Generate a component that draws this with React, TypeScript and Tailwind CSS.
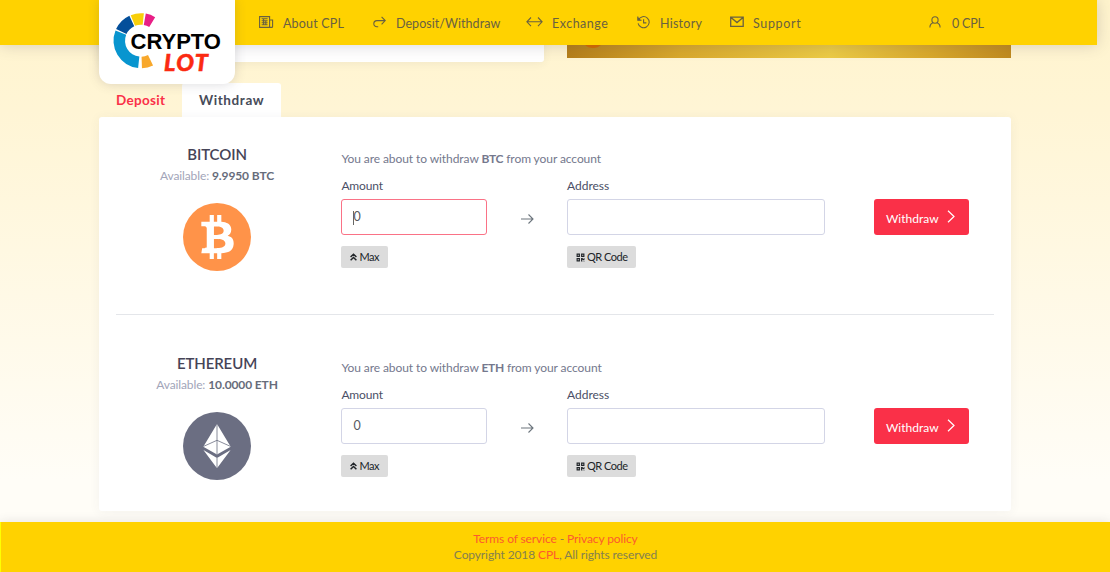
import React from "react";
import { FaBtc, FaQrcode } from "react-icons/fa";

function ringSegment(from: number, to: number, fill: string) {
  const cx = 42;
  const cy = 40.7;
  const point = (r: number, deg: number) => {
    const a = (deg * Math.PI) / 180;
    return `${(cx + r * Math.sin(a)).toFixed(2)} ${(cy - r * Math.cos(a)).toFixed(2)}`;
  };
  const R = 27.5;
  const r = 16;
  return (
    <path
      key={fill}
      fill={fill}
      d={`M${point(R, from)} A${R} ${R} 0 0 1 ${point(R, to)} L${point(r, to)} A${r} ${r} 0 0 0 ${point(r, from)} Z`}
    />
  );
}

function Logo() {
  return (
    <svg viewBox="0 0 136 84" className="block h-[84px] w-[136px]">
      {ringSegment(186, 292, "#0895cf")}
      {ringSegment(295, 335, "#044f9a")}
      {ringSegment(338, 366, "#f8cf0a")}
      {ringSegment(370, 391, "#e81f86")}
      {ringSegment(154, 178, "#f8a82c")}
      <text x="31.5" y="48.5" fontSize="22.5" fontWeight="700" fontFamily="Liberation Sans, sans-serif" textLength="90.5" lengthAdjust="spacingAndGlyphs" stroke="#fff" strokeWidth="1.2" paintOrder="stroke">
        CRYPTO
      </text>
      <text x="65" y="71" fontSize="23.5" fontWeight="900" fontStyle="italic" fontFamily="Lato, sans-serif" fill="#fb2a12" stroke="#fb2a12" strokeWidth=".5" textLength="44" lengthAdjust="spacing">
        LOT
      </text>
    </svg>
  );
}

const line = { fill: "none", stroke: "currentColor", strokeWidth: 1.1 };

const NewsIcon = () => (
  <svg viewBox="0 0 15 12" className="h-3 w-[15px]" {...line}>
    <path d="M.6.6h10v10.8h-10zM10.6 4h3v6.4a1 1 0 0 1-1 1h-2M2.6 2.8h6M2.6 4.8h6M2.6 6.8h6M2.6 8.8h6M4.6 2.8v6M6.8 4.8v4" />
  </svg>
);
const RedoIcon = () => (
  <svg viewBox="0 0 13 12" className="h-3 w-[13px]" {...line}>
    <path d="M8.6.9l3.6 3.7-3.6 3.7M12 4.6H3.9a3.1 3.1 0 0 0 0 6.2h1.3" />
  </svg>
);
const SwapIcon = () => (
  <svg viewBox="0 0 17 12" className="h-3 w-[17px]" {...line}>
    <path d="M1 5.8h15M5 1.5L.9 5.8 5 10.1M12 1.5l4.1 4.3-4.1 4.3" />
  </svg>
);
const HistoryIcon = () => (
  <svg viewBox="0 0 13 13" className="h-[13px] w-[13px]" {...line}>
    <path d="M1.5 3.8A5.6 5.6 0 1 1 1.1 7.4M.8.6v3.7h3.8M6.6 3.2v3.7h2.8" />
    <path d="M.8 1l3.2 3.2H.8z" fill="currentColor" stroke="none" />
  </svg>
);
const MailIcon = () => (
  <svg viewBox="0 0 14 12" className="h-3 w-[14px]" {...line}>
    <path d="M.7 1.1h12.5v9.2H.7zM1 1.6l6 5 6-5" strokeWidth="1.3" />
  </svg>
);
const UserIcon = () => (
  <svg viewBox="0 0 12 13" className="h-[13px] w-3" {...line}>
    <path d="M6 .8c1.9 0 3.1 1.4 3.1 3.1S7.8 7.2 6 7.2 2.9 5.6 2.9 3.900 4.1.8 6 .8zM4.300 6.800C2.300 7.400.9 9 .9 11.400M7.700 6.800c2 .6 3.400 2.200 3.400 4.600" />
  </svg>
);
const ArrowRight = () => (
  <svg viewBox="0 0 13 12" className="h-3 w-[13px] text-[#6c757d]" {...line}>
    <path d="M0 6h12M7.500 1.500L12 6l-4.500 4.500" />
  </svg>
);
const ChevronRight = () => (
  <svg viewBox="0 0 8 13" className="h-[13px] w-2" {...line}>
    <path d="M1 .8l6 5.700-6 5.700" strokeWidth="1.2" />
  </svg>
);
const DoubleUp = () => (
  <svg viewBox="0 0 7 8" className="h-2 w-[7px] shrink-0" fill="none" stroke="#212529" strokeWidth="1.5">
    <path d="M.6 4L3.500 1.200 6.400 4M.6 7.300l2.900-2.800 2.900 2.800" />
  </svg>
);

function BitcoinLogo() {
  return (
    <div className="flex h-[68px] w-[68px] items-center justify-center rounded-full bg-[#ff9349] text-white">
      <FaBtc className="h-[44px] w-[33px]" />
    </div>
  );
}

function EthereumLogo() {
  return (
    <svg viewBox="0 0 68 68" className="h-[68px] w-[68px]">
      <circle cx="34" cy="34" r="34" fill="#6b6e82" />
      <path fill="#fff" d="M34 12l13.700 22.700L34 42.500l-13.700-7.800zM20.400 38L34 45.900 47.600 38 34 56.300z" />
      <path d="M34 12v30.500M34 46v10M20.500 34.400L34 28.300l13.500 6.100" fill="none" stroke="#6b6e82" strokeWidth=".8" />
    </svg>
  );
}

const nav = [
  { label: "About CPL", icon: <NewsIcon />, item: "w-[114px]", slot: "w-6", text: "tracking-[0.18px]" },
  { label: "Deposit/Withdraw", icon: <RedoIcon />, item: "w-[153px]", slot: "w-[23px]", text: "tracking-[0.05px]" },
  { label: "Exchange", icon: <SwapIcon />, item: "w-[111px]", slot: "w-[26px]", text: "tracking-[0.5px]" },
  { label: "History", icon: <HistoryIcon />, item: "w-[93px]", slot: "w-[23px]", text: "tracking-[0.25px]" },
  { label: "Support", icon: <MailIcon />, item: "w-[199px]", slot: "w-[23px]", text: "tracking-[0.65px]" },
  { label: "0 CPL", icon: <UserIcon />, item: "w-[60px]", slot: "w-[23px]", text: "tracking-[-0.2px]" },
];

function Header() {
  return (
    <header className="absolute left-0 top-0 z-10 flex h-[45px] w-[1097px] bg-[#ffd200] pl-[99px] shadow-[0_0_16px_rgba(69,65,78,0.22)]">
      <div className="h-[84px] w-[136px] shrink-0 rounded-b-[12px] bg-white shadow-[0_0_12px_rgba(69,65,78,0.2)]">
        <Logo />
      </div>
      <nav className="flex h-[45px] pl-6 text-[12.5px] text-[#6a6140]">
        {nav.map((n) => (
          <a key={n.label} className={`flex items-center whitespace-nowrap ${n.item}`}>
            <span className={`-mt-px shrink-0 ${n.slot}`}>{n.icon}</span>
            <span className={`pt-[4px] ${n.text}`}>{n.label}</span>
          </a>
        ))}
      </nav>
    </header>
  );
}

type Coin = { name: string; code: string; available: string; logo: React.ReactNode; active?: boolean };

function CoinRow({ coin }: { coin: Coin }) {
  const smallButton = "mt-[11px] flex h-[22px] items-center rounded-[2px] bg-[#dcdcdc] text-[11px] text-[#212529]";
  return (
    <section className="flex h-[197px] pt-[27px]">
      <div className="flex w-[202px] flex-col items-center">
        <h2 className="text-[15px] font-semibold leading-5 tracking-[-0.1px] text-[#464457]">{coin.name}</h2>
        <p className="mt-[3px] text-xs leading-[18px] tracking-[-0.12px] text-[#a2a5b9]">
          Available: <b className="font-bold text-[#676c7b]">{coin.available}</b>
        </p>
        <div className="mt-[17.5px]">{coin.logo}</div>
      </div>
      <div className="ml-[23.4px] pt-[5px]">
        <p className="text-xs leading-[19px] tracking-[-0.08px] text-[#74788d]">
          You are about to withdraw <b className="font-bold tracking-[-0.3px]">{coin.code}</b> from your account
        </p>
        <div className="mt-[8px] flex">
          <div className="w-[146px]">
            <label className="block text-xs leading-[19px] tracking-[-0.15px] text-[#4b4f66]">Amount</label>
            <div className={`mt-[4px] flex h-[36px] items-center rounded-[3px] border pl-[11px] text-[12.5px] text-[#575962] ${coin.active ? "border-[#fa7286]" : "border-[#d3d5e6]"}`}>
              <span className="relative">
                0
                {coin.active && <i className="absolute left-0 top-[3px] h-[14px] w-px bg-[#666]" />}
              </span>
            </div>
            <button className={`${smallButton} w-[46.5px] gap-[2px] pl-[9px] tracking-[-0.5px]`}>
              <DoubleUp /> Max
            </button>
          </div>
          <div className="w-[79.600px] pl-[33.500px] pt-[37px]">
            <ArrowRight />
          </div>
          <div className="w-[258px]">
            <label className="block text-xs leading-[19px] text-[#4b4f66]">Address</label>
            <div className="mt-[4px] h-[36px] rounded-[3px] border border-[#d3d5e6]" />
            <button className={`${smallButton} w-[69.5px] gap-[2px] whitespace-nowrap pl-[9px] tracking-[-0.5px]`}>
              <FaQrcode className="h-[9px] w-[9px] shrink-0" /> QR Code
            </button>
          </div>
          <button className="ml-[49px] mt-[23px] flex h-[36px] w-[95px] items-center rounded-[3px] bg-[#fa3048] pl-3 text-xs text-white">
            <span className="pt-[3px]">Withdraw</span>
            <span className="-mt-px ml-[8px]"><ChevronRight /></span>
          </button>
        </div>
      </div>
    </section>
  );
}

export default function App() {
  return (
    <div className="relative flex h-[572px] w-[1110px] flex-col overflow-hidden bg-[linear-gradient(180deg,#fff4cd_0px,#fff5d5_110px,#fffdf7_480px)] font-[Lato,sans-serif]">
      <Header />
      <div className="flex h-[82.5px] shrink-0 items-start pl-[99px]">
        <div className="h-[62px] w-[444.500px] rounded-b-[3px] bg-white shadow-[0_1px_10px_rgba(69,65,78,0.08)]" />
        <div className="ml-[23.500px] h-[58px] w-[444px] overflow-hidden bg-[linear-gradient(100deg,#b27b18_0%,#d9a92c_27%,#eccb45_60%,#d9a92c_82%,#c08a1e_100%)] pl-[14px] pt-[22px]">
          <div className="h-[25.500px] w-[24px] rounded-full bg-[#d46a00]" />
        </div>
      </div>
      <div className="flex h-[34.5px] shrink-0 pl-[99px] text-[13.5px] font-bold leading-[35px]">
        <div className="w-[83px] pl-[17px] tracking-[0.3px] text-[#fa3048]">Deposit</div>
        <div className="w-[99px] rounded-t-[3px] bg-white pl-[17px] tracking-[0.6px] text-[#474b59]">Withdraw</div>
      </div>
      <main className="mx-[99px] h-[394px] w-[912px] shrink-0 rounded-[3px] bg-white px-[17px] shadow-[0_1px_12px_rgba(69,65,78,0.06)]">
        <CoinRow coin={{ name: "BITCOIN", code: "BTC", available: "9.9950 BTC", logo: <BitcoinLogo />, active: true }} />
        <div className="mb-[11px] h-px bg-[#e4e6ea]" />
        <CoinRow coin={{ name: "ETHEREUM", code: "ETH", available: "10.0000 ETH", logo: <EthereumLogo /> }} />
      </main>
      <footer className="z-10 mt-[11px] h-[50px] shrink-0 border-l border-[#ffff00] bg-[#ffd200] pt-[9px] text-center text-xs leading-4 text-[#85804f] shadow-[0_0_10px_rgba(69,65,78,0.14)]">
        <p className="tracking-[-0.11px]">
          <a className="text-[#fc5a2e]">Terms of service</a> - <a className="text-[#fc5a2e]">Privacy policy</a>
        </p>
        <p className="tracking-[-0.11px]">
          Copyright 2018 <a className="text-[#fc5a2e]">CPL</a>, All rights reserved
        </p>
      </footer>
    </div>
  );
}
